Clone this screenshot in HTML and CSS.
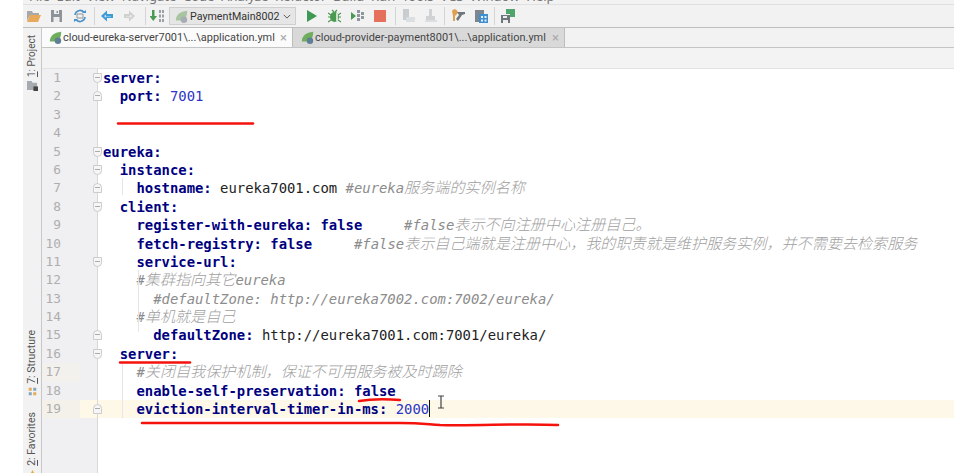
FILE: index.html
```html
<!DOCTYPE html>
<html lang="en">
<head>
<meta charset="utf-8">
<title>application.yml</title>
<link rel="stylesheet" href="styles.css">
</head>
<body>
<div class="app">
  <div class="margin"></div>
  <div class="main">
    <div class="menu"><span class="menu-text">File&nbsp; Edit&nbsp; View&nbsp; Navigate&nbsp; Code&nbsp; Analyze&nbsp; Refactor&nbsp; Build&nbsp; Run&nbsp; Tools&nbsp; VCS&nbsp; Window&nbsp; Help</span></div>
    <div class="toolbar">
      <svg class="ic" viewBox="0 0 14 14"><path d="M0 2h5l1 2h6v2H4L2 8 0 12z" fill="#a8a8a8"/><path d="M3 6h11l-3 7H0z" fill="#e8a95a"/></svg>
      <svg class="ic" viewBox="0 0 14 14"><path d="M1 1h11v12H1z" fill="#8d9499"/><path d="M4 1h5v4H4zM3.500 8h6v5h-6z" fill="#eee"/><path d="M6.500 2h1.500v2H6.500z" fill="#8d9499"/></svg>
      <svg class="ic" viewBox="0 0 14 14"><path d="M2 6a5 5 0 0 1 9-2.500M12 8a5 5 0 0 1-9 2.500" fill="none" stroke="#4a90c8" stroke-width="1.600"/><path d="M4 5h6v4H4z" fill="none" stroke="#8d9499"/><path d="M9 4h4V1zM5 10H1v3z" fill="#4a90c8"/></svg>
      <i class="sep"></i>
      <svg class="ic" viewBox="0 0 14 14"><path d="M0 7l6-5.500V5h6v4H6v3.500z" fill="#3d9bd6"/><path d="M3 7l2-1.500v1.500h5v0.500H5V9z" fill="#bfe0f5"/></svg>
      <svg class="ic" viewBox="0 0 14 14"><path d="M11 7L5 1.500V5H0v4h5v3.500z" fill="#d0d0d0"/><path d="M8 7L6 5.500V7H2v.5h4V9z" fill="#f0f0f0"/></svg>
      <i class="sep"></i>
      <svg class="ic tight" viewBox="0 0 14 14"><path d="M2 1h2.500v6H7l-3.700 5L-.5 7H2z" fill="#4b9a52"/><path d="M9 1h2v3H9zM12 1h2v3h-2zM9 5.500h2v3H9zM12 5.500h2v3h-2zM9 10h2v3H9zM12 10h2v3h-2z" fill="#9aa2a8"/></svg>
      <div class="combo">
        <svg class="leaf" viewBox="0 0 16 16"><path d="M1 13C1 6 6 2 15 1c0 8-3 11-8 12z" fill="#a9c4a0"/><circle cx="11" cy="12" r="4" fill="#a7adb3"/></svg>
        <span class="combo-text">PaymentMain8002</span>
        <svg class="chev" viewBox="0 0 10 6"><path d="M1 1l4 4 4-4" fill="none" stroke="#555" stroke-width="1.200"/></svg>
      </div>
      <svg class="ic" viewBox="0 0 14 14"><path d="M2 1l10 6-10 6z" fill="#3c9a52"/></svg>
      <svg class="ic" viewBox="0 0 14 14"><ellipse cx="6.500" cy="8" rx="4.500" ry="5" fill="#4b9a52"/><path d="M0 4l3 2M13 4l-3 2M0 8h3M13 8h-3M0 13l3-2M13 13l-3-2M4 1l2 2M9 1L7 3" stroke="#4b9a52" stroke-width="1.200"/><path d="M8 4h2v8H8z" fill="#cfe3cf"/></svg>
      <svg class="ic" viewBox="0 0 14 14"><path d="M0 3l5 4-5 4z" fill="#4b9a52"/><path d="M6 1h3v3H6zM10 3h3v3h-3zM6 5h3v3H6zM10 7h3v3h-3zM6 9h3v3H6z" fill="#8f979c"/></svg>
      <svg class="ic" viewBox="0 0 14 14"><path d="M0 1h12v12H0z" fill="#e5705c"/></svg>
      <i class="sep"></i>
      <svg class="ic" viewBox="0 0 14 14"><path d="M1 0h6v11H1z" fill="#c9cdd0"/><path d="M4 8h9v5H4z" fill="#dcdfe1"/></svg>
      <svg class="ic tighter" viewBox="0 0 14 14"><path d="M5 0h3v7h3v4H2V7h3z" fill="#cfd3d5"/><path d="M1 11h12v2H1z" fill="#dcdfe1"/></svg>
      <i class="sep narrow"></i>
      <svg class="ic" viewBox="0 0 14 14"><path d="M1 2a3 3 0 1 1 4 4l-1 1v5H2V7z" fill="#e0a050"/><path d="M6 3h8v2l-3 1-4 6-2-2 3-4z" fill="#6f777c"/></svg>
      <svg class="ic" viewBox="0 0 14 14"><path d="M1 1h9v12H1z" fill="#7d868c"/><path d="M5 5h9v9H5z" fill="#3d8fd1"/><path d="M7 7h2v2H7zM10.500 7h2v2h-2zM7 10.500h2v2H7zM10.500 10.500h2v2h-2z" fill="#e8f0f8"/></svg>
      <i class="sep narrow"></i>
      <svg class="ic" viewBox="0 0 14 14"><path d="M0 6h9v8H0z" fill="#6f777c"/><path d="M2 7h4v2H2zM2 11h5v3H2z" fill="#eee"/><path d="M5 0h9v8H9V5H5z" fill="#4fa56a"/></svg>
    </div>
    <div class="workspace">
      <aside class="strip">
        <div class="strip-top">
          <span class="vlabel project"><u>1</u>: Project</span>
          <svg class="sic" viewBox="0 0 12 12"><path d="M0 1h5l1 2h5v8H0z" fill="#a6abaf"/><path d="M7 7h5v5H7z" fill="#444"/></svg>
        </div>
        <div class="strip-bottom">
          <span class="vlabel"><u>7</u>: Structure</span>
          <svg class="sic small" viewBox="0 0 12 12"><path d="M1 1h4v4H1zM7 7h4v4H7z" fill="#e6a955"/><path d="M7 1h4v4H7zM1 7h4v4H1z" fill="#7fa7c4"/></svg>
          <span class="vlabel fav"><u>2</u>: Favorites</span>
          <svg class="sic" viewBox="0 0 12 12"><path d="M6 0l2 4 4 .5-3 3 1 4.500-4-2.500-4 2.500 1-4.500-3-3L4 4z" fill="#e8a93c"/></svg>
        </div>
      </aside>
      <div class="content">
        <div class="tabs">
          <div class="tab active">
            <svg class="leaf" viewBox="0 0 16 16"><path d="M1 13C1 6 6 2 15 1c0 8-3 11-8 12z" fill="#6fae5c"/><circle cx="11" cy="12" r="4" fill="#5f7f96"/></svg>
            <span class="tab-text">cloud-eureka-server7001\...\application.yml</span><b class="x">×</b>
          </div>
          <div class="tab second">
            <svg class="leaf" viewBox="0 0 16 16"><path d="M1 13C1 6 6 2 15 1c0 8-3 11-8 12z" fill="#6fae5c"/><circle cx="11" cy="12" r="4" fill="#5f7f96"/></svg>
            <span class="tab-text">cloud-provider-payment8001\...\application.yml</span><b class="x">×</b>
          </div>
        </div>
        <div class="crumbs"></div>
        <div class="editor">
          <div class="gutter">
            <div class="ln">1<i class="fold open"></i></div>
            <div class="ln">2<i class="fold close"></i></div>
            <div class="ln">3</div>
            <div class="ln">4</div>
            <div class="ln">5<i class="fold open"></i></div>
            <div class="ln">6<i class="fold open"></i></div>
            <div class="ln">7<i class="fold close"></i></div>
            <div class="ln">8<i class="fold open"></i></div>
            <div class="ln">9</div>
            <div class="ln">10</div>
            <div class="ln">11<i class="fold open"></i></div>
            <div class="ln">12</div>
            <div class="ln">13</div>
            <div class="ln">14</div>
            <div class="ln">15<i class="fold close"></i></div>
            <div class="ln">16<i class="fold open"></i></div>
            <div class="ln warm">17</div>
            <div class="ln">18</div>
            <div class="ln cur">19<i class="fold close"></i></div>
          </div>
          <div class="code">
            <div class="l"><b>server:</b></div>
            <div class="l">  <b>port:</b> <em>7001</em></div>
            <div class="l"></div>
            <div class="l"></div>
            <div class="l"><b>eureka:</b></div>
            <div class="l">  <b>instance:</b></div>
            <div class="l">    <b>hostname:</b> eureka7001.com <s>#eureka<span class="c">服务端的实例名称</span></s></div>
            <div class="l">  <b>client:</b></div>
            <div class="l">    <b>register-with-eureka:</b> <b>false</b>     <s>#false<span class="c">表示不向注册中心注册自己。</span></s></div>
            <div class="l">    <b>fetch-registry:</b> <b>false</b>     <s>#false<span class="c">表示自己端就是注册中心，我的职责就是维护服务实例，并不需要去检索服务</span></s></div>
            <div class="l">    <b>service-url:</b></div>
            <div class="l">    <s>#<span class="c">集群指向其它</span>eureka</s></div>
            <div class="l">      <s>#defaultZone: http://eureka7002.com:7002/eureka/</s></div>
            <div class="l">    <s>#<span class="c">单机就是自己</span></s></div>
            <div class="l">      <b>defaultZone:</b> http://eureka7001.com:7001/eureka/</div>
            <div class="l">  <b>server:</b></div>
            <div class="l">    <s>#<span class="c">关闭自我保护机制，保证不可用服务被及时踢除</span></s></div>
            <div class="l">    <b>enable-self-preservation:</b> <b>false</b></div>
            <div class="l cur">    <b>eviction-interval-timer-in-ms:</b> <em>2000</em><i class="caret"></i></div>
          </div>
        </div>
      </div>
    </div>
  </div>
</div>
<svg class="marks" viewBox="0 0 954 473">
  <path class="guide" d="M122.500 178v17M138.500 270v62M122.500 362v56"/>
  <path class="pen" d="M118 123.500H253"/>
  <path class="pen" d="M120 362.500H190"/>
  <path class="pen" d="M359 401c12-2 28-2 41-1"/>
  <path class="pen" d="M142 423H400c20 0 25 1 40 2c40 1 80-2 118 0"/>
  <path class="cursor" d="M438 396h6M438 408h6M441 396v12"/>
</svg>
</body>
</html>
```
FILE: styles.css
```css
html, body { margin: 0; padding: 0; background: #fff; overflow: hidden; }
body { width: 954px; height: 473px; position: relative; font-family: "Noto Sans", "Liberation Sans", sans-serif; }
.app { display: flex; width: 954px; height: 473px; }
.margin { width: 23px; flex: none; background: #fff; }
.main { flex: 1; display: flex; flex-direction: column; min-width: 0; }
.menu { height: 4px; overflow: hidden; background: #f2f2f2; font-size: 13px; line-height: 4px; color: #777; white-space: nowrap; padding-left: 6px; }
.menu-text { display: block; margin-top: -6px; }
.toolbar { height: 24px; flex: none; background: #f2f2f2; border-top: 1px solid #e0e0e0; border-bottom: 1px solid #bfbfbf; display: flex; align-items: center; padding-left: 4px; gap: 9px; box-sizing: border-box; }
.ic { width: 14px; height: 14px; flex: none; }
.sep { width: 1px; height: 18px; background: #d4d4d4; flex: none; margin: 0 -3px 0 -2px; }
.sep.narrow { margin-left: -3px; }
.tight { margin-left: -2px; }
.tighter { margin-left: -1px; }
.combo { width: 127px; height: 18px; box-sizing: border-box; background: #e6e6e6; border: 1px solid #cfcfcf; display: flex; align-items: center; padding: 0 4px 0 5px; gap: 2px; font-family: Roboto, sans-serif; font-size: 10.700px; color: #333; flex: none; margin-left: -4px; }
.combo-text { flex: 1; white-space: nowrap; }
.chev { width: 8px; height: 5px; }
.leaf { width: 13px; height: 13px; flex: none; }
.workspace { flex: 1; display: flex; min-height: 0; }
.strip { width: 19px; flex: none; background: #f2f2f2; border-right: 1px solid #c8c8c8; box-sizing: border-box; display: flex; flex-direction: column; justify-content: space-between; align-items: center; overflow: hidden; }
.strip-top, .strip-bottom { display: flex; flex-direction: column; align-items: center; gap: 3px; }
.strip-top { padding-top: 7px; }
.strip-bottom { margin-bottom: -8px; }
.vlabel { writing-mode: vertical-rl; transform: rotate(180deg); font-family: Roboto, sans-serif; font-size: 10.500px; color: #555; white-space: nowrap; line-height: 14px; }
.vlabel.project { font-size: 10px; }
.vlabel u { text-decoration: underline; }
.fav { margin-top: 13px; margin-bottom: 1px; }
.sic { width: 11px; height: 11px; flex: none; }
.sic.small { width: 9px; height: 9px; }
.content { flex: 1; min-width: 0; display: flex; flex-direction: column; }
.tabs { height: 20px; display: flex; background: #f2f2f2; border-bottom: 1px solid #c4c4c4; box-sizing: border-box; flex: none; }
.tab { width: 251px; flex: none; box-sizing: border-box; display: flex; align-items: center; gap: 1px; font-family: Roboto, sans-serif; font-size: 10.950px; color: #444; padding: 0 5px 0 7px; background: #d9d9d9; white-space: nowrap; border-right: 1px solid #bdbdbd; height: 19px; }
.tab.active { background: #fbfbfb; }
.tab.second { width: 272px; padding-left: 8px; }
.tab-text { flex: 1; }
.x { font-weight: 400; font-size: 13px; color: #aaa; }
.crumbs { height: 21px; flex: none; background: #f4f3f4; border-bottom: 1px solid #e2e2e2; box-sizing: border-box; }
.editor { flex: 1; display: flex; min-height: 0; background: #fff; }
.gutter { width: 56px; flex: none; background: #f0eff1; border-right: 1px solid #d8d8d8; box-sizing: border-box; }
.ln { height: 18.400px; line-height: 18.400px; font-family: "DejaVu Sans Mono", monospace; font-size: 12.800px; color: #aeaeae; padding-right: 36px; text-align: right; position: relative; }
.ln.warm { background: linear-gradient(90deg, #f3f1ee 38px, transparent 38px); }
.ln.cur { background: linear-gradient(90deg, #f4f1ea 38px, #fdf8e8 38px); }
.fold { position: absolute; right: -5px; top: 4px; width: 9px; height: 10px; background: #f6f6f6; border: 1px solid #ccc; box-sizing: border-box; z-index: 1; }
.fold::after { content: ""; position: absolute; left: 1px; right: 1px; top: 3px; height: 1px; background: #aaa; }
.fold.open { border-radius: 0 0 5px 5px; }
.fold.close { border-radius: 5px 5px 0 0; }
.code { flex: 1; min-width: 0; }
.l { height: 18.400px; line-height: 18.400px; padding-left: 5px; font-family: "DejaVu Sans Mono", "Noto Sans CJK SC", monospace; font-size: 13.900px; color: #222; white-space: pre; }
.l.cur { background: #fdf8e8; }
.l b { color: #000080; font-weight: 700; }
.l em { color: #2a35c8; font-style: normal; }
.l s { color: #8c8c8c; font-style: italic; text-decoration: none; }
.l .c { font-family: "Noto Sans CJK SC", sans-serif; font-size: 15.100px; font-weight: 300; color: #a0a0a0; line-height: 1; }
.caret { display: inline-block; width: 1px; height: 17px; background: #111; vertical-align: top; }
.marks { position: absolute; left: 0; top: 0; width: 954px; height: 473px; pointer-events: none; }
.pen { fill: none; stroke: #f5120c; stroke-width: 2.500; stroke-linecap: round; }
.guide { fill: none; stroke: #e6e6e6; stroke-width: 1; }
.cursor { fill: none; stroke: #444; stroke-width: 1.200; }
```
